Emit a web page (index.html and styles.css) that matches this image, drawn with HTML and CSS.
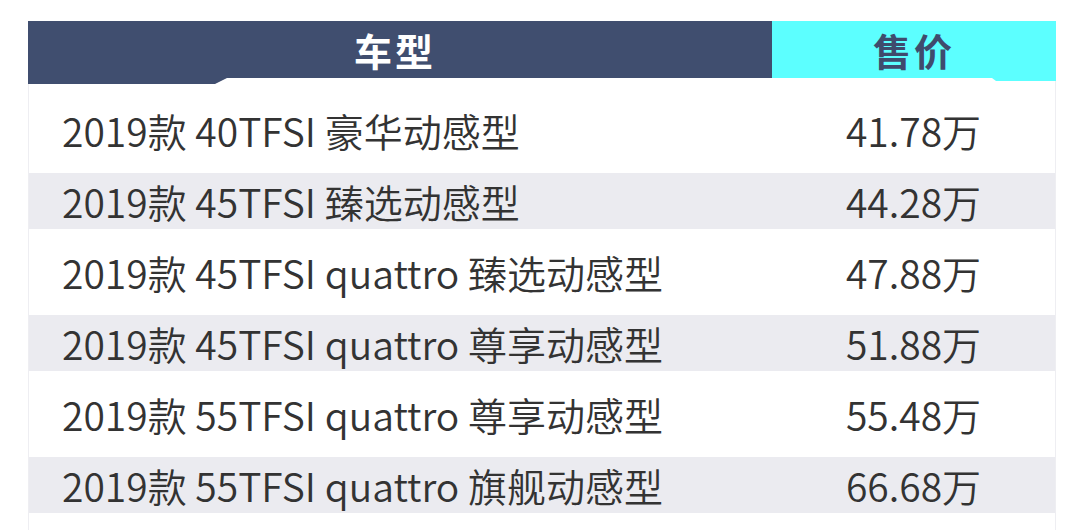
FILE: index.html
```html
<!DOCTYPE html>
<html lang="zh">
<head>
<meta charset="utf-8">
<link rel="stylesheet" href="styles.css">
</head>
<body>
<div class="table">
  <div class="head">
    <div class="hcell model">车型</div>
    <div class="hcell price">售价</div>
  </div>
  <div class="row first">
    <div class="cell model">2019款 40TFSI 豪华动感型</div>
    <div class="cell price">41.78万</div>
  </div>
  <div class="row alt">
    <div class="cell model">2019款 45TFSI 臻选动感型</div>
    <div class="cell price">44.28万</div>
  </div>
  <div class="row">
    <div class="cell model">2019款 45TFSI quattro 臻选动感型</div>
    <div class="cell price">47.88万</div>
  </div>
  <div class="row alt">
    <div class="cell model">2019款 45TFSI quattro 尊享动感型</div>
    <div class="cell price">51.88万</div>
  </div>
  <div class="row">
    <div class="cell model">2019款 55TFSI quattro 尊享动感型</div>
    <div class="cell price">55.48万</div>
  </div>
  <div class="row alt">
    <div class="cell model">2019款 55TFSI quattro 旗舰动感型</div>
    <div class="cell price">66.68万</div>
  </div>
  <div class="row tail"></div>
</div>
</body>
</html>
```

FILE: styles.css
```css
html, body {
  margin: 0;
  padding: 0;
  background: #ffffff;
  overflow: hidden;
}

body {
  font-family: "Noto Sans CJK SC", "Noto Sans", sans-serif;
  color: #333333;
}

.table {
  margin: 21px 0 0 28px;
  width: 1028px;
}

.head {
  display: flex;
  height: 57px;
}

.hcell {
  position: relative;
  display: flex;
  align-items: center;
  justify-content: center;
  font-size: 38px;
  font-weight: 700;
  letter-spacing: 3px;
}

.hcell.model {
  width: 744px;
  padding-right: 10px;
  box-sizing: border-box;
  background: #404e6f;
  color: #ffffff;
}

.hcell.model::after {
  content: "";
  position: absolute;
  left: 0;
  top: 100%;
  width: 199px;
  height: 6px;
  background: #404e6f;
  clip-path: polygon(0 0, 100% 0, calc(100% - 12px) 100%, 0 100%);
}

.hcell.price {
  width: 284px;
  background: #5cffff;
  color: #3f4b6d;
}

.hcell.price::after {
  content: "";
  position: absolute;
  right: 0;
  top: 100%;
  width: 64px;
  height: 3px;
  background: #5cffff;
  clip-path: polygon(0 0, 100% 0, 100% 100%, 4px 100%);
}

.row {
  display: flex;
  align-items: center;
  height: 86px;
  border-left: 1px solid #eeeef2;
  border-right: 1px solid #eeeef2;
  font-size: 39px;
  font-weight: 350;
  line-height: 1;
}

.row.first {
  height: 95px;
  padding-top: 10px;
  box-sizing: border-box;
}

.row.alt {
  height: 56px;
  background: #ebebf0;
}

.row.tail {
  height: 40px;
}

.cell.model {
  width: 743px;
  padding-left: 33px;
  box-sizing: border-box;
  white-space: nowrap;
}

.cell.price {
  width: 283px;
  text-align: center;
}
```
